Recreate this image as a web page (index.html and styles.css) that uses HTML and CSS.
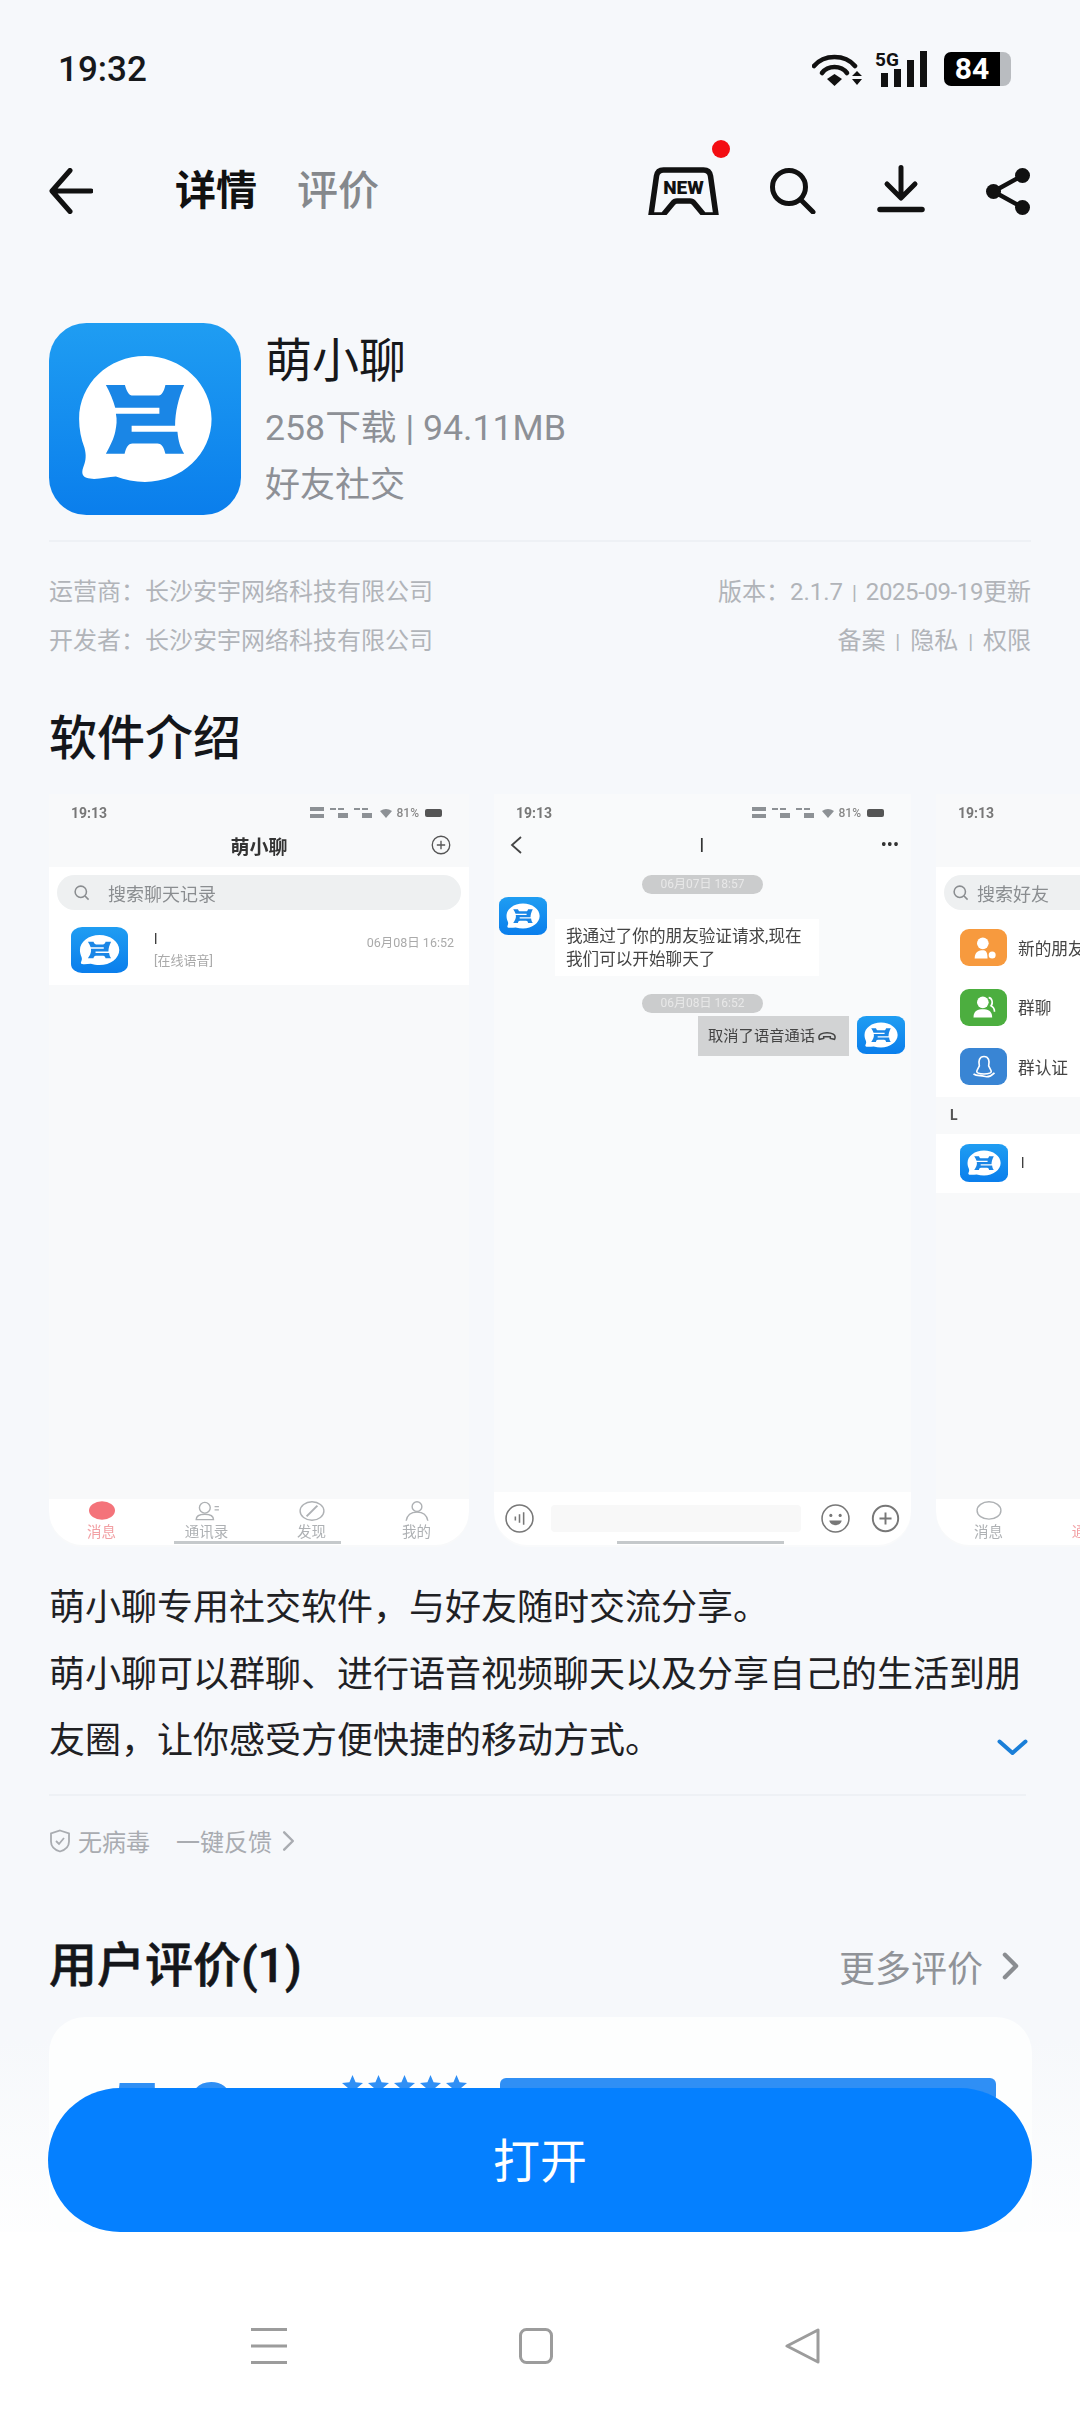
FILE: index.html
```html
<!DOCTYPE html>
<html lang="zh-CN">
<head>
    <meta charset="UTF-8">
    <title>萌小聊</title>
    <link rel="stylesheet" href="styles.css">
</head>
<body>

<svg class="sprite" width="0" height="0">
    <symbol id="logo" viewBox="28 25 574 574" preserveAspectRatio="none">
        <defs>
            <linearGradient id="logoBg" x1="0" y1="0" x2="0" y2="1">
                <stop offset="0" stop-color="#1f9df2"/>
                <stop offset="1" stop-color="#0a7eec"/>
            </linearGradient>
        </defs>
        <rect x="28" y="25" width="574" height="574" rx="112" fill="url(#logoBg)"/>
        <path d="M315 124C425 124 514 208 514 312C514 416 425 500 315 500C285 500 255 494 228 484C200 486 165 496 140 488C124 482 126 468 132 452C138 436 140 420 134 398C124 372 118 342 118 312C118 208 205 124 315 124Z" fill="#fff"/>
        <path d="M198 210H255C260 228 266 242 280 242H352C366 242 372 228 376 210H432C415 250 405 290 405 332H275V350H412C415 380 420 395 432 416H376C372 398 366 385 352 385H278C264 385 258 398 254 416H198C212 390 222 370 226 350C230 330 232 315 228 296H358V278H226C220 255 210 232 198 210Z" fill="#1a86e6"/>
    </symbol>
    <symbol id="plus" viewBox="0 0 24 24">
        <circle cx="12" cy="12" r="10.5" fill="none" stroke="currentColor" stroke-width="1.6"/>
        <path d="M12 7v10M7 12h10" stroke="currentColor" stroke-width="1.6"/>
    </symbol>
    <symbol id="lens" viewBox="0 0 24 24">
        <circle cx="11" cy="11" r="8" fill="none" stroke="currentColor" stroke-width="2.2"/>
        <path d="M17 17l5 5" stroke="currentColor" stroke-width="2.2"/>
    </symbol>
    <symbol id="chev" viewBox="0 0 18 30">
        <path d="M3 3l12 12L3 27" fill="none" stroke="currentColor" stroke-linecap="round" stroke-linejoin="round"/>
    </symbol>
    <symbol id="star" viewBox="0 0 24 24">
        <path d="M12 0l3.5 8.3 8.5.7-6.5 5.7 2 8.8L12 18l-7.5 5.5 2-8.8L0 9l8.5-.7z" fill="#2f8ff5"/>
    </symbol>
    <symbol id="sim" viewBox="0 0 84 14">
        <g fill="#8d9195">
            <rect x="0" y="1" width="14" height="4"/><rect x="0" y="8" width="14" height="4"/>
            <rect x="20" y="2" width="6" height="2"/><rect x="28" y="2" width="6" height="2"/><rect x="28" y="7" width="10" height="5"/>
            <rect x="44" y="2" width="6" height="2"/><rect x="52" y="2" width="6" height="2"/><rect x="52" y="7" width="10" height="5"/>
            <path d="M70 5q6-4 12 0l-6 7z"/>
        </g>
    </symbol>
</svg>

<div class="page">

    <div class="status-bar">
        <span class="clock">19:32</span>
        <div class="status-icons">
            <svg class="ic-wifi" viewBox="0 0 51 36">
                <path d="M2 15C12 3 33 3 43 15" fill="none" stroke="#111" stroke-width="4.6" stroke-linecap="round"/>
                <path d="M10 22C16 14 29 14 35 22" fill="none" stroke="#111" stroke-width="4.6" stroke-linecap="round"/>
                <path d="M15 28l7.500-5 7.500 5-7.500 7z" fill="#111"/>
                <path d="M40 25l5-5 5 5zM40 28h10l-5 6z" fill="#111"/>
            </svg>
            <svg class="ic-signal" viewBox="0 0 52 36">
                <text x="0" y="15" class="ic-5g">5G</text>
                <rect x="6" y="22" width="7" height="14" fill="#111"/>
                <rect x="19" y="18" width="7" height="18" fill="#111"/>
                <rect x="32" y="9" width="7" height="27" fill="#111"/>
                <rect x="45" y="0" width="7" height="36" fill="#111"/>
            </svg>
            <div class="battery"><span class="battery-level">84</span><span class="battery-tip"></span></div>
        </div>
    </div>

    <div class="nav">
        <svg class="ic-back" viewBox="0 0 44 46">
            <path d="M42 23H4M21 2.500L3 23l18 20.500" fill="none" stroke="#111" stroke-width="5" stroke-linecap="round" stroke-linejoin="round"/>
        </svg>
        <div class="tabs">
            <span class="tab active">详情</span>
            <span class="tab">评价</span>
        </div>
        <div class="nav-icons">
            <div class="nav-game">
                <svg class="ic-game" viewBox="0 0 71 48">
                    <path d="M3 48L8.500 9Q9.500 3 15.500 3H55.500Q61.500 3 62.500 9L68 48H56L46 36Q44.500 34 42 34H29Q26.500 34 25 36L15 48Z" fill="none" stroke="#111" stroke-width="5.500" stroke-linejoin="round"/>
                    <text x="35.500" y="27" class="ic-new">NEW</text>
                </svg>
                <span class="red-dot"></span>
            </div>
            <svg class="ic-search" viewBox="0 0 46 46">
                <circle cx="19" cy="19" r="16.500" fill="none" stroke="#111" stroke-width="5"/>
                <path d="M31 32l12 12" stroke="#111" stroke-width="5" stroke-linecap="round"/>
            </svg>
            <svg class="ic-download" viewBox="0 0 48 48">
                <path d="M24 2.500V31M10 19l14 14 14-14" fill="none" stroke="#111" stroke-width="5" stroke-linecap="round" stroke-linejoin="round"/>
                <path d="M3 44.500h42" stroke="#111" stroke-width="5.500" stroke-linecap="round"/>
            </svg>
            <svg class="ic-share" viewBox="0 0 44 47">
                <path d="M36.500 7.500L7.500 23.500l29 16" fill="none" stroke="#111" stroke-width="4.500"/>
                <circle cx="36.500" cy="7.500" r="7.500" fill="#111"/>
                <circle cx="7.500" cy="23.500" r="7.500" fill="#111"/>
                <circle cx="36.500" cy="39.500" r="7.500" fill="#111"/>
            </svg>
        </div>
    </div>

    <div class="app-head">
        <svg class="app-logo"><use href="#logo"/></svg>
        <div class="app-info">
            <div class="app-name">萌小聊</div>
            <div class="app-stat">258下载 | 94.11MB</div>
            <div class="app-cat">好友社交</div>
        </div>
    </div>

    <div class="divider head-divider"></div>

    <div class="meta">
        <div class="meta-row">
            <span>运营商：长沙安宇网络科技有限公司</span>
            <span>版本：2.1.7 <i class="sep">|</i> <span class="meta-date">2025-09-19</span>更新</span>
        </div>
        <div class="meta-row">
            <span>开发者：长沙安宇网络科技有限公司</span>
            <span>备案 <i class="sep sep-wide">|</i> 隐私 <i class="sep sep-wide">|</i> 权限</span>
        </div>
    </div>

    <h2 class="section-title intro-title">软件介绍</h2>

    <div class="shots">

        <!-- chat list -->
        <div class="shot">
            <div class="shot-status">
                <span>19:13</span>
                <span class="shot-status-right"><svg class="ic-sim"><use href="#sim"/></svg>81%<b class="mini-batt"></b></span>
            </div>
            <div class="shot-title shot-title-center">
                <span>萌小聊</span>
                <svg class="shot-plus"><use href="#plus"/></svg>
            </div>
            <div class="shot-strip">
                <div class="shot-search"><svg class="shot-lens"><use href="#lens"/></svg>搜索聊天记录</div>
                <div class="chat-row">
                    <svg class="avatar-lg"><use href="#logo"/></svg>
                    <div class="chat-text">
                        <div class="chat-name">l</div>
                        <div class="chat-last">[在线语音]</div>
                    </div>
                    <div class="chat-time">06月08日 16:52</div>
                </div>
            </div>
            <div class="shot-tabs">
                <div class="shot-tab on">
                    <svg viewBox="0 0 24 18"><ellipse cx="12" cy="8.500" rx="12" ry="8.500" fill="#f4737a"/></svg>
                    消息
                </div>
                <div class="shot-tab">
                    <svg viewBox="0 0 24 18"><circle cx="10" cy="6" r="5" fill="none" stroke="#aeb1b4" stroke-width="1.300"/><path d="M2 17c0-4 4-5 8-5s8 1 8 5zM19 5h4M19 8h4" fill="none" stroke="#aeb1b4" stroke-width="1.300"/></svg>
                    通讯录
                </div>
                <div class="shot-tab">
                    <svg viewBox="0 0 24 18"><ellipse cx="12" cy="9" rx="11" ry="8.500" fill="none" stroke="#aeb1b4" stroke-width="1.300"/><path d="M7 14L17 4" stroke="#aeb1b4" stroke-width="1.800"/></svg>
                    发现
                </div>
                <div class="shot-tab">
                    <svg viewBox="0 0 24 18"><circle cx="12" cy="5" r="4.500" fill="none" stroke="#aeb1b4" stroke-width="1.300"/><path d="M2 18c1-6 5-8 10-8s9 2 10 8" fill="none" stroke="#aeb1b4" stroke-width="1.300"/></svg>
                    我的
                </div>
            </div>
            <span class="home-bar"></span>
        </div>

        <!-- conversation -->
        <div class="shot shot-mid">
            <div class="shot-status">
                <span>19:13</span>
                <span class="shot-status-right"><svg class="ic-sim"><use href="#sim"/></svg>81%<b class="mini-batt"></b></span>
            </div>
            <div class="shot-title shot-title-between">
                <svg class="shot-chev" viewBox="0 0 14 20"><path d="M12 2L3 10l9 8" fill="none" stroke="#444" stroke-width="1.800"/></svg>
                <span>l</span>
                <span class="shot-dots">•••</span>
            </div>
            <div class="convo">
                <div class="date-pill">06月07日 18:57</div>
                <div class="msg">
                    <svg class="avatar-md"><use href="#logo"/></svg>
                    <div class="bubble">我通过了你的朋友验证请求,现在<br>我们可以开始聊天了</div>
                </div>
                <div class="date-pill date-pill-2">06月08日 16:52</div>
                <div class="msg msg-mine">
                    <div class="bubble bubble-mine">取消了语音通话
                        <svg class="ic-hangup" viewBox="0 0 24 12"><path d="M3 10C0 4 7 2 12 2s12 2 9 8l-5-1V7H8v2z" fill="none" stroke="#444" stroke-width="1.800"/></svg>
                    </div>
                    <svg class="avatar-md"><use href="#logo"/></svg>
                </div>
            </div>
            <div class="input-bar">
                <svg class="input-ic" viewBox="0 0 28 28"><circle cx="14" cy="14" r="13" fill="none" stroke="#777" stroke-width="1.500"/><path d="M10 12v4M14 10v8M18 8v12" stroke="#777" stroke-width="1.500"/></svg>
                <div class="input-box"></div>
                <svg class="input-ic" viewBox="0 0 28 28"><circle cx="14" cy="14" r="13" fill="none" stroke="#777" stroke-width="1.500"/><circle cx="9.500" cy="11" r="1.500" fill="#777"/><circle cx="18.500" cy="11" r="1.500" fill="#777"/><path d="M8 16h12c-1 6-11 6-12 0z" fill="#777"/></svg>
                <svg class="input-ic"><use href="#plus"/></svg>
            </div>
            <span class="home-bar home-bar-mid"></span>
        </div>

        <!-- contacts, runs off the right edge -->
        <div class="shot">
            <div class="shot-status"><span>19:13</span></div>
            <div class="shot-title"></div>
            <div class="shot-strip">
                <div class="shot-search shot-search-tight"><svg class="shot-lens"><use href="#lens"/></svg>搜索好友</div>
                <div class="contact">
                    <span class="contact-ic orange"><svg viewBox="0 0 24 24"><circle cx="11" cy="8" r="5" fill="#fff"/><path d="M4 21c0-6 4-7 7-7s4 2 4 7z" fill="#fff"/><circle cx="19" cy="18" r="3" fill="#fff"/></svg></span>新的朋友
                </div>
                <div class="contact">
                    <span class="contact-ic green"><svg viewBox="0 0 24 24"><circle cx="11" cy="8" r="5" fill="#fff"/><path d="M3 21c0-6 4-7 8-7s8 1 8 7z" fill="#fff"/><path d="M16 4c3 0 4 5 2 7 2 1 3 3 3 5" fill="none" stroke="#fff" stroke-width="1.400"/></svg></span>群聊
                </div>
                <div class="contact">
                    <span class="contact-ic blue"><svg viewBox="0 0 24 24"><path d="M12 3c4 0 5 4 4 8l2 4c1 2-2 3-6 3s-7-1-6-3l2-4C7 7 8 3 12 3zM3 18c3 2 6 1 9 2s6 0 9-3" fill="none" stroke="#fff" stroke-width="1.400"/></svg></span>群认证
                </div>
            </div>
            <div class="letter">L</div>
            <div class="shot-strip contact-single">
                <svg class="avatar-md"><use href="#logo"/></svg>
                <span>l</span>
            </div>
            <div class="shot-tabs">
                <div class="shot-tab">
                    <svg viewBox="0 0 24 18"><ellipse cx="12" cy="8.500" rx="11" ry="8" fill="none" stroke="#aeb1b4" stroke-width="1.300"/></svg>
                    消息
                </div>
                <div class="shot-tab on">
                    <svg viewBox="0 0 24 18"></svg>
                    通讯录
                </div>
            </div>
        </div>
    </div>

    <p class="desc">萌小聊专用社交软件，与好友随时交流分享。<br>萌小聊可以群聊、进行语音视频聊天以及分享自己的生活到朋<br>友圈，让你感受方便快捷的移动方式。
        <svg class="desc-more" viewBox="0 0 31 17"><path d="M2.500 2.500L15.500 14 28.500 2.500" fill="none" stroke="#1a7fd8" stroke-width="4" stroke-linecap="round" stroke-linejoin="round"/></svg>
    </p>

    <div class="divider desc-divider"></div>

    <div class="safe-row">
        <svg class="ic-shield" viewBox="0 0 22 24"><path d="M11 1.500l9 3v8c0 5-4 8.500-9 10-5-1.500-9-5-9-10v-8z" fill="none" stroke="#a9acb1" stroke-width="1.800"/><path d="M7 12l3 3 5-6" fill="none" stroke="#a9acb1" stroke-width="1.800"/></svg>
        <span class="safe-text">无病毒</span>
        <span class="safe-link">一键反馈</span>
        <svg class="safe-chev"><use href="#chev"/></svg>
    </div>

    <div class="reviews-head">
        <h2 class="section-title">用户评价(1)</h2>
        <div class="more-link">更多评价<svg class="more-chev"><use href="#chev"/></svg></div>
    </div>

    <div class="review-card">
        <span class="score">5.0</span>
        <div class="stars">
            <svg><use href="#star"/></svg>
            <svg><use href="#star"/></svg>
            <svg><use href="#star"/></svg>
            <svg><use href="#star"/></svg>
            <svg><use href="#star"/></svg>
        </div>
        <div class="rate-bar"></div>
    </div>

    <div class="dock">
        <div class="open-btn">打开</div>
        <div class="sys-nav">
            <svg class="sys-menu" viewBox="0 0 36 36"><path d="M0 1.500h36M0 18h36M0 34.500h36" stroke="#9c9c9c" stroke-width="3"/></svg>
            <svg class="sys-home" viewBox="0 0 34 36"><rect x="1.500" y="1.500" width="31" height="33" rx="6" fill="none" stroke="#9c9c9c" stroke-width="3"/></svg>
            <svg class="sys-back" viewBox="0 0 35 36"><path d="M33 2v32L2 18z" fill="none" stroke="#9c9c9c" stroke-width="3" stroke-linejoin="round"/></svg>
        </div>
    </div>

</div>

</body>
</html>
```

FILE: styles.css
```css
* { box-sizing: border-box; }
html, body { margin: 0; padding: 0; }
body {
  font-family: Roboto, "Noto Sans CJK SC", sans-serif;
  color: #1a1a1a;
}
.sprite { position: absolute; }

.page {
  position: relative;
  width: 1080px;
  height: 2412px;
  overflow: hidden;
  background: linear-gradient(#f6f8fb 0, #f6f8fb 2040px, #ffffff 2260px);
}

/* status bar */
.status-bar {
  height: 138px;
  padding: 0 69px 0 58px;
  display: flex;
  align-items: center;
  justify-content: space-between;
}
.clock { font-size: 35px; font-weight: 500; color: #16181b; }
.status-icons { display: flex; align-items: center; }
.ic-wifi { width: 51px; height: 36px; }
.ic-signal { width: 52px; height: 36px; margin-left: 12px; overflow: visible; }
.ic-5g { font: 700 19px Roboto, sans-serif; fill: #111; }
.battery { display: flex; align-items: center; margin-left: 17px; }
.battery-level {
  width: 56px;
  height: 34px;
  background: #000;
  color: #fff;
  border-radius: 7px 0 0 7px;
  font-size: 30px;
  font-weight: 700;
  line-height: 34px;
  text-align: center;
}
.battery-tip {
  width: 11px;
  height: 34px;
  background: #b9bcc0;
  border-radius: 0 8px 8px 0;
}

/* top nav */
.nav {
  height: 106px;
  padding: 0 50px 0 49px;
  display: flex;
  align-items: center;
}
.ic-back { width: 44px; height: 46px; }
.tabs { display: flex; gap: 40px; margin-left: 82px; }
.tab { font-size: 41px; line-height: 50px; font-weight: 500; color: #85888c; }
.tab.active { color: #111; font-weight: 700; }
.nav-icons { margin-left: auto; display: flex; align-items: center; gap: 61px; }
.nav-game { position: relative; height: 48px; margin-right: -10px; }
.ic-game { width: 71px; height: 48px; display: block; }
.ic-new { font: 900 19px Roboto, sans-serif; fill: #111; text-anchor: middle; }
.red-dot {
  position: absolute;
  left: 64px;
  top: -27px;
  width: 18px;
  height: 18px;
  border-radius: 50%;
  background: #f30d12;
}
.ic-search { width: 46px; height: 46px; }
.ic-download { width: 48px; height: 48px; margin-top: -4px; }
.ic-share { width: 44px; height: 47px; }

/* app header */
.app-head {
  margin: 79px 49px 0;
  display: flex;
  gap: 24px;
}
.app-logo { width: 192px; height: 192px; flex: none; }
.app-name { font-size: 47px; line-height: 76px; color: #16181b; }
.app-stat { font-size: 35.700px; line-height: 58px; color: #8d9096; }
.app-cat { font-size: 35px; line-height: 58px; color: #8d9096; }

.divider { height: 2px; margin: 0 49px; background: #eef1f5; }
.head-divider { margin-top: 25px; }
.desc-divider { margin-top: 19px; margin-right: 54px; }

.meta { margin: 26px 49px 0; }
.meta-row {
  display: flex;
  justify-content: space-between;
  font-size: 24px;
  line-height: 48px;
  color: #b1b4b9;
}
.meta-date { letter-spacing: -0.4px; }
.sep { font-style: normal; font-size: 20px; padding: 0 3px; }
.sep-wide { padding: 0 4px; }

.section-title {
  margin: 0;
  font-size: 48px;
  line-height: 60px;
  font-weight: 500;
  color: #14161a;
}
.intro-title { margin: 43px 49px 0; }

/* screenshots strip */
.shots {
  margin: 25px 0 0 49px;
  display: flex;
  gap: 25px;
  height: 753px;
  overflow: hidden;
}
.shot {
  position: relative;
  flex: none;
  width: 420px;
  height: 753px;
  display: flex;
  flex-direction: column;
  background: #f8f9fa;
  border-radius: 0 0 34px 34px;
  overflow: hidden;
  font-size: 15px;
  color: #666;
}
.shot > * { filter: blur(0.7px); }
.shot-mid { width: 417px; background: #f9fafb; }

.shot-status {
  height: 34px;
  padding: 4px 27px 0 22px;
  display: flex;
  align-items: center;
  justify-content: space-between;
  font-size: 14px;
  font-weight: 700;
  color: #777;
}
.shot-status-right { display: flex; align-items: center; gap: 3px; font-size: 12px; font-weight: 500; color: #888; }
.ic-sim { width: 84px; height: 14px; }
.mini-batt { width: 17px; height: 8px; background: #555; border-radius: 2px; margin-left: 3px; }

.shot-title { height: 39px; padding-bottom: 5px; display: flex; align-items: center; position: relative; color: #333; font-size: 19px; font-weight: 700; }
.shot-title-center { justify-content: center; }
.shot-title-between { justify-content: space-between; padding: 0 12px 5px 15px; font-weight: 400; }
.shot-plus { position: absolute; right: 18px; top: 7px; width: 20px; height: 20px; color: #555; }
.shot-chev { width: 14px; height: 20px; }
.shot-dots { font-size: 18px; line-height: 20px; color: #333; }

.shot-strip { background: #fff; padding-top: 8px; }
.shot-search {
  height: 35px;
  margin: 0 8px;
  padding-left: 16px;
  border-radius: 18px;
  background: #eef0f1;
  display: flex;
  align-items: center;
  gap: 18px;
  font-size: 18px;
  color: #8a8d90;
}
.shot-search-tight { padding-left: 8px; gap: 8px; margin-right: -40px; }
.shot-lens { width: 17px; height: 17px; color: #8a8d90; }

.chat-row { height: 75px; padding: 5px 15px 0 22px; display: flex; align-items: center; }
.avatar-lg { width: 57px; height: 46px; flex: none; }
.chat-text { margin-left: 26px; flex: 1; }
.chat-name { font-size: 14px; line-height: 22px; color: #333; }
.chat-last { font-size: 13px; line-height: 22px; color: #aaa; }
.chat-time { align-self: flex-start; margin-top: 17px; font-size: 12.500px; color: #aaa; }

.shot-tabs {
  margin-top: auto;
  margin-bottom: 2px;
  height: 46px;
  display: flex;
  background: #fff;
  border-radius: 0 0 34px 34px;
}
.shot-tab {
  width: 105px;
  display: flex;
  flex-direction: column;
  align-items: center;
  font-size: 14.500px;
  line-height: 16px;
  color: #aeb1b4;
  padding-top: 2px;
}
.shot-tab svg { width: 26px; height: 20px; margin-bottom: 4px; }
.shot-tab.on { color: #f2a0a4; }
.home-bar {
  position: absolute;
  left: 125px;
  bottom: 3px;
  width: 167px;
  height: 3px;
  background: #c5c9cb;
}
.home-bar-mid { left: 123px; }

.convo { padding-top: 8px; }
.date-pill {
  width: 121px;
  height: 19px;
  margin-left: 148px;
  border-radius: 10px;
  background: #cbcccd;
  color: #e8e8e8;
  font-size: 12px;
  line-height: 19px;
  text-align: center;
}
.date-pill-2 { margin-top: 18px; }
.msg { display: flex; margin-top: 3px; padding: 0 6px 0 5px; }
.msg-mine { justify-content: flex-end; }
.avatar-md { width: 48px; height: 38px; flex: none; }
.bubble {
  width: 264px;
  height: 57px;
  margin: 22px 0 0 8px;
  padding: 6px 11px;
  background: #fff;
  font-size: 16.600px;
  line-height: 23px;
  color: #444;
}
.bubble-mine {
  width: 151px;
  height: 40px;
  margin: 0 8px 0 0;
  padding: 0 0 0 10px;
  background: #d2d3d4;
  display: flex;
  align-items: center;
  gap: 2px;
  font-size: 15.300px;
  white-space: nowrap;
}
.ic-hangup { width: 20px; height: 10px; flex: none; }

.input-bar {
  margin-top: auto;
  margin-bottom: 2px;
  height: 53px;
  padding: 0 11px;
  display: flex;
  align-items: center;
  background: #fff;
  border-radius: 0 0 34px 34px;
}
.input-ic { width: 29px; height: 29px; flex: none; color: #777; }
.input-box { width: 251px; height: 27px; margin: 0 20px 0 17px; background: #f8f8f8; border-radius: 4px; }
.input-bar .input-ic:last-child { margin-left: 21px; }

.contact {
  height: 59.500px;
  padding-left: 24px;
  display: flex;
  align-items: center;
  gap: 11px;
  font-size: 16.700px;
  color: #444;
  white-space: nowrap;
}
.shot-search + .contact { margin-top: 8px; }
.contact-ic {
  width: 47px;
  height: 37px;
  border-radius: 9px;
  display: flex;
  align-items: center;
  justify-content: center;
}
.contact-ic svg { width: 28px; height: 28px; }
.orange { background: #f79a3e; }
.green { background: #4cae3f; }
.blue { background: #3985d4; }
.letter { height: 37px; padding-left: 14px; line-height: 37px; font-size: 14px; font-weight: 700; color: #555; }
.contact-single {
  height: 59px;
  padding: 0 0 0 24px;
  display: flex;
  align-items: center;
  gap: 13px;
  font-size: 14px;
  color: #333;
}

/* description */
.desc {
  position: relative;
  margin: 28px 50px 0 49px;
  font-size: 36px;
  line-height: 66.500px;
  color: #1f2124;
  white-space: nowrap;
}
.desc-more {
  position: absolute;
  right: 2px;
  bottom: 19px;
  width: 31px;
  height: 17px;
}

.safe-row {
  margin: 25px 49px 0;
  height: 40px;
  display: flex;
  align-items: center;
  font-size: 24px;
  color: #a9acb1;
}
.ic-shield { width: 22px; height: 24px; }
.safe-text { margin-left: 7px; }
.safe-link { margin-left: 26px; }
.safe-chev { width: 13px; height: 22px; margin-left: 10px; color: #a9acb1; stroke-width: 3.400px; }

.reviews-head {
  margin: 75px 61px 0 49px;
  display: flex;
  align-items: center;
  justify-content: space-between;
}
.reviews-head .section-title { -webkit-text-stroke: 0.6px #14161a; }
.more-link { display: flex; align-items: center; font-size: 36px; color: #909398; }
.more-chev { width: 17px; height: 28px; margin-left: 19px; color: #8a8d91; stroke-width: 4.600px; }

/* review card sits under the open button */
.review-card {
  margin: 21px 48px 0 49px;
  height: 223px;
  padding: 58px 0 0 61px;
  display: flex;
  align-items: flex-start;
  background: #fdfefe;
  border-radius: 36px;
}
.score {
  width: 232px;
  margin-top: -10px;
  font-size: 88px;
  line-height: 100px;
  font-weight: 700;
  color: #2f8ff5;
}
.stars { display: flex; gap: 5px; }
.stars svg { width: 21px; height: 21px; }
.rate-bar {
  width: 496px;
  height: 24px;
  margin: 3px 0 0 33px;
  border-radius: 6px;
  background: #2f8ff5;
}

.dock {
  position: absolute;
  left: 0;
  right: 0;
  bottom: 0;
  height: 324px;
}
.open-btn {
  height: 144px;
  margin: 0 48px;
  border-radius: 72px;
  background: #0580ff;
  color: #fff;
  font-size: 47px;
  line-height: 148px;
  text-align: center;
}
.sys-nav {
  height: 180px;
  padding: 96px 9px 0 0;
  display: flex;
  justify-content: center;
  align-items: flex-start;
  gap: 232px;
  background: #fff;
}
.sys-menu, .sys-home, .sys-back { height: 36px; }
.sys-menu { width: 36px; }
.sys-home { width: 34px; }
.sys-back { width: 35px; }
```
